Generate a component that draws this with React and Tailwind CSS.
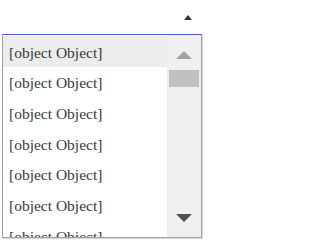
const ITEMS = Array.from({ length: 7 }, () => "[object Object]");

export default function App() {
  return (
    <div className="w-[204px] h-[240px] bg-white overflow-hidden font-['Liberation_Serif',serif]">
      {/* closed select, arrow only */}
      <div className="h-[34px] flex items-start justify-end pr-[12px] pt-[15px]">
        <svg width="8" height="5" viewBox="0 0 8 5">
          <path d="M0 5 L4 0 L8 5 Z" fill="#333" />
        </svg>
      </div>

      {/* open listbox */}
      <div className="ml-[2px] w-[200px] h-[204px] flex border border-[#a0a0a0] border-t-[#4a5bc9] shadow-[1px_1px_1px_rgba(0,0,0,0.15)] overflow-hidden">
        <ul className="flex-1 min-w-0 pt-[1px]">
          {ITEMS.map((item, i) => (
            <li
              key={i}
              className={`h-[30.7px] pl-[6px] pt-[2px] flex items-center text-[15.5px] text-[#3a3a3a] whitespace-nowrap ${
                i === 0 ? "bg-[#ececec]" : ""
              }`}
            >
              {item}
            </li>
          ))}
        </ul>

        <div className="w-[34px] bg-[#f0f0f0] flex flex-col items-center">
          <svg className="mt-[16px]" width="16" height="8" viewBox="0 0 16 8">
            <path d="M0 8 L8 0 L16 8 Z" fill="#a3a3a3" />
          </svg>
          <div className="mt-[11px] w-[30px] h-[17px] bg-[#c1c1c1]" />
          <div className="flex-1" />
          <svg className="mb-[15px]" width="16" height="8" viewBox="0 0 16 8">
            <path d="M0 0 L8 8 L16 0 Z" fill="#505050" />
          </svg>
        </div>
      </div>
    </div>
  );
}
